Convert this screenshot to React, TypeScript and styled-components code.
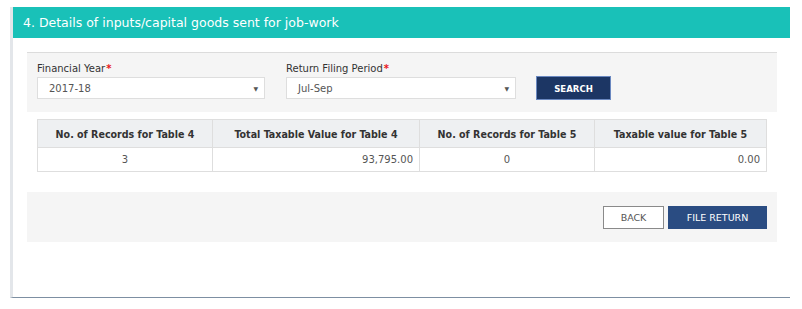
import React from "react";
import styled, { createGlobalStyle } from "styled-components";

const GlobalStyle = createGlobalStyle`
  body {
    margin: 0;
    background: #ffffff;
    font-family: "DejaVu Sans", Verdana, sans-serif;
  }
`;

const Page = styled.div`
  padding: 7px 12px 0 10px;
`;

const Panel = styled.section`
  width: 780px;
  height: 291px;
  box-sizing: border-box;
  border-left: 3px solid #e3e6ea;
  border-bottom: 1px solid #7d8fa2;
`;

const Header = styled.h2`
  margin: 0;
  height: 31px;
  line-height: 31px;
  padding-left: 10px;
  background: #19c1b8;
  color: #ffffff;
  font-size: 12.5px;
  font-weight: normal;
`;

const Body = styled.div`
  padding: 14px 13px 0 14px;
`;

const GrayBox = styled.div`
  background: #f5f5f5;
`;

const FilterBox = styled(GrayBox)`
  border-top: 1px solid #dcdcdc;
  height: 60px;
  box-sizing: border-box;
  padding: 8px 10px 0;
  display: flex;
  align-items: flex-start;
  gap: 20px;
`;

const Field = styled.div<{ w: number }>`
  width: ${p => p.w}px;
  display: flex;
  flex-direction: column;
  gap: 1px;
`;

const Label = styled.label`
  font-size: 10px;
  line-height: 15px;
  color: #333;
`;

const Req = styled.span`
  color: #e8171c;
  font-weight: bold;
  margin-left: 1px;
`;

const Select = styled.div`
  height: 22px;
  box-sizing: border-box;
  border: 1px solid #dedede;
  background: #ffffff;
  display: flex;
  align-items: center;
  justify-content: space-between;
  padding: 0 6px 0 11px;
  font-size: 10px;
  color: #555;
`;

const Caret = styled.span`
  font-size: 6px;
  color: #555;
`;

const Button = styled.button<{ variant?: "dark" | "primary" | "plain" }>`
  height: 23px;
  box-sizing: border-box;
  font-family: inherit;
  font-size: 9.5px;
  cursor: pointer;
  padding: 0;
  ${p =>
    p.variant === "plain"
      ? `background: #fff; color: #555; border: 1px solid #8a8a8a;`
      : p.variant === "dark"
      ? `background: #1c3664; color: #fff; border: 1px solid #6a88c0; font-weight: bold; font-stretch: condensed; font-family: "DejaVu Sans Condensed", "DejaVu Sans", sans-serif;`
      : `background: #2a4c82; color: #fff; border: 1px solid #2a4c82;`}
`;

const SearchButton = styled(Button)`
  width: 75px;
  height: 24px;
  margin-top: 15px;
`;

const Table = styled.table`
  margin: 7px 10px 0;
  width: 729px;
  border-collapse: collapse;
  table-layout: fixed;
  font-size: 10px;
`;

const Th = styled.th`
  height: 25px;
  background: #eef0f2;
  border: 1px solid #dedede;
  color: #333;
  font-family: "DejaVu Sans Condensed", "DejaVu Sans", sans-serif;
  font-stretch: condensed;
  font-size: 10.6px;
  font-weight: bold;
  text-align: center;
`;

const Td = styled.td<{ align?: "center" | "right" }>`
  height: 23px;
  border: 1px solid #dedede;
  color: #555;
  background: #fff;
  text-align: ${p => p.align || "center"};
  padding: 0 6px;
`;

const ActionBox = styled(GrayBox)`
  margin-top: 20px;
  height: 50px;
  display: flex;
  justify-content: flex-end;
  align-items: center;
  gap: 4px;
  padding-right: 10px;
`;

const cols = [175, 207, 175, 172];

const App: React.FC = () => {
  return (
    <>
      <GlobalStyle />
      <Page>
        <Panel>
          <Header>4. Details of inputs/capital goods sent for job-work</Header>
          <Body>
            <FilterBox>
              <Field w={228}>
                <Label>
                  Financial Year<Req>*</Req>
                </Label>
                <Select>
                  2017-18
                  <Caret>▼</Caret>
                </Select>
              </Field>
              <Field w={230} style={{ marginLeft: 1 }}>
                <Label>
                  Return Filing Period<Req>*</Req>
                </Label>
                <Select>
                  Jul-Sep
                  <Caret>▼</Caret>
                </Select>
              </Field>
              <SearchButton variant="dark">SEARCH</SearchButton>
            </FilterBox>
            <Table>
              <colgroup>
                {cols.map((w, i) => (
                  <col key={i} style={{ width: w }} />
                ))}
              </colgroup>
              <thead>
                <tr>
                  <Th>No. of Records for Table 4</Th>
                  <Th>Total Taxable Value for Table 4</Th>
                  <Th>No. of Records for Table 5</Th>
                  <Th>Taxable value for Table 5</Th>
                </tr>
              </thead>
              <tbody>
                <tr>
                  <Td>3</Td>
                  <Td align="right">93,795.00</Td>
                  <Td>0</Td>
                  <Td align="right">0.00</Td>
                </tr>
              </tbody>
            </Table>
            <ActionBox>
              <Button variant="plain" style={{ width: 61 }}>
                BACK
              </Button>
              <Button variant="primary" style={{ width: 99 }}>
                FILE RETURN
              </Button>
            </ActionBox>
          </Body>
        </Panel>
      </Page>
    </>
  );
};

export default App;
